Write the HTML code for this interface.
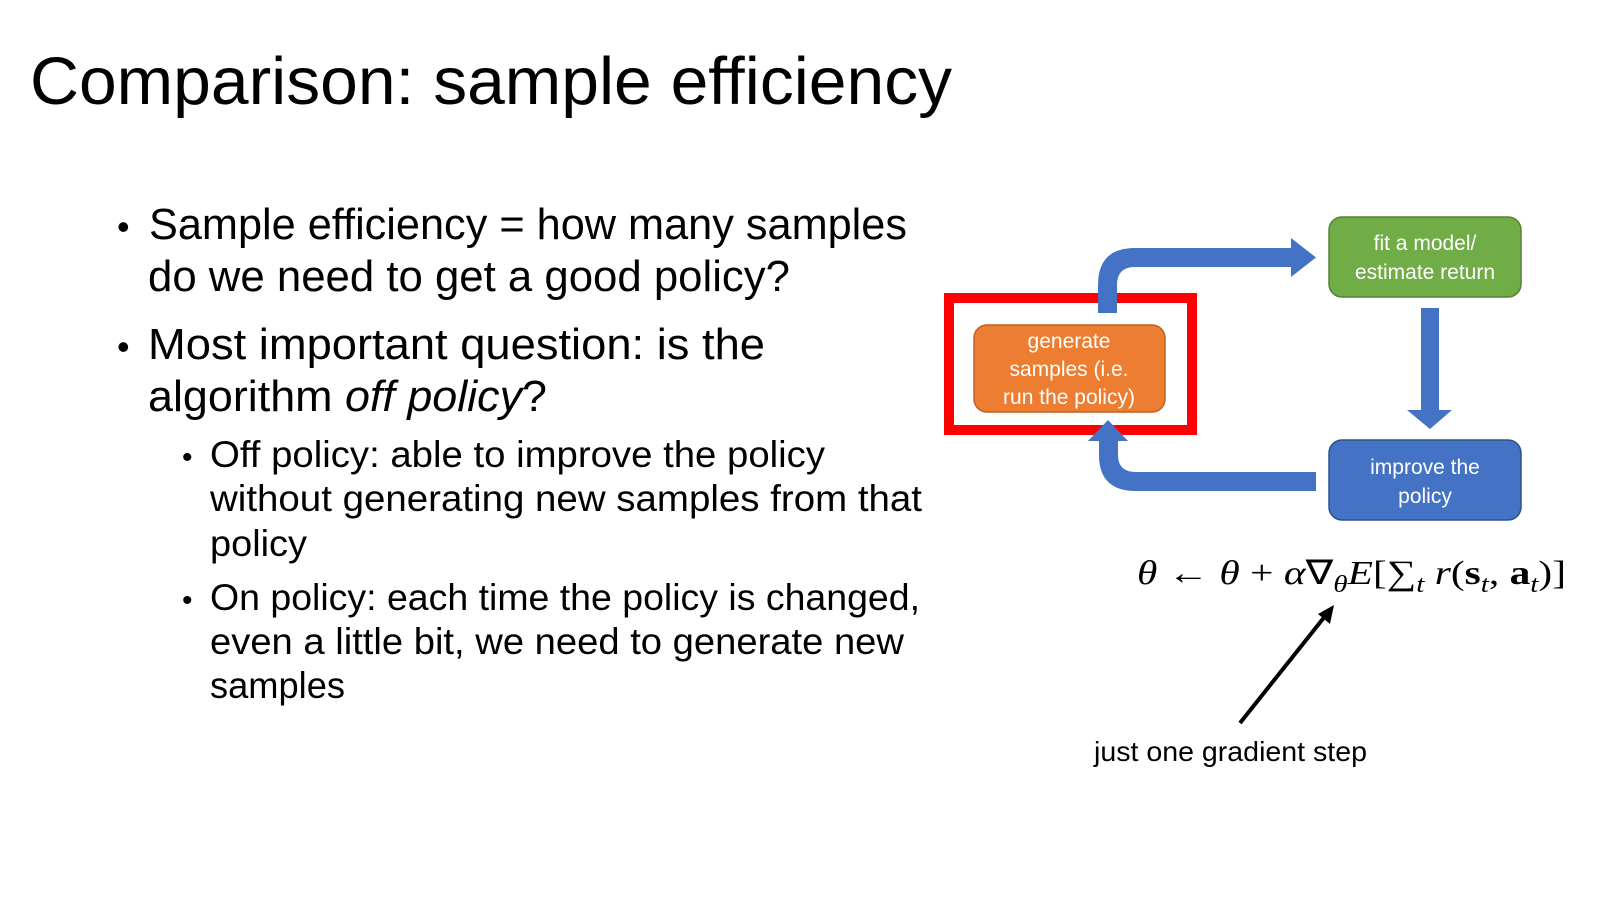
<!DOCTYPE html>
<html><head><meta charset="utf-8"><style>
html,body{margin:0;padding:0;background:#fff;width:1619px;height:898px;overflow:hidden}
svg{display:block}
text{font-family:"Liberation Sans",sans-serif;fill:#000}
.w{fill:#fff;font-size:21px}
</style></head><body>
<svg width="1619" height="898" viewBox="0 0 1619 898" xmlns="http://www.w3.org/2000/svg">
<text x="30" y="104" font-size="67" textLength="922" lengthAdjust="spacingAndGlyphs">Comparison: sample efficiency</text>

<g transform="translate(-1,-2)">
<g font-size="44">
<text x="118" y="241" font-size="36">•</text>
<text x="150" y="241" textLength="758" lengthAdjust="spacingAndGlyphs">Sample efficiency = how many samples</text>
<text x="149" y="293" textLength="642" lengthAdjust="spacingAndGlyphs">do we need to get a good policy?</text>
<text x="118" y="361" font-size="36">•</text>
<text x="149" y="361" textLength="617" lengthAdjust="spacingAndGlyphs">Most important question: is the</text>
<text x="149" y="413" textLength="399" lengthAdjust="spacingAndGlyphs">algorithm <tspan font-style="italic">off policy</tspan>?</text>
</g>
<g font-size="37">
<text x="183" y="469" font-size="30">•</text>
<text x="211" y="469" textLength="615" lengthAdjust="spacingAndGlyphs">Off policy: able to improve the policy</text>
<text x="211" y="513" textLength="712" lengthAdjust="spacingAndGlyphs">without generating new samples from that</text>
<text x="211" y="558" textLength="97" lengthAdjust="spacingAndGlyphs">policy</text>
<text x="183" y="612" font-size="30">•</text>
<text x="211" y="612" textLength="710" lengthAdjust="spacingAndGlyphs">On policy: each time the policy is changed,</text>
<text x="211" y="656" textLength="694" lengthAdjust="spacingAndGlyphs">even a little bit, we need to generate new</text>
<text x="211" y="700" textLength="135" lengthAdjust="spacingAndGlyphs">samples</text>
</g>
</g>

<g transform="translate(-6,0)">
<rect x="955" y="298" width="243" height="132" fill="none" stroke="#ff0000" stroke-width="10"/>
<rect x="980" y="325" width="191" height="87" rx="13" fill="#ED7D31" stroke="#C0621F" stroke-width="1.5"/>
<rect x="1335" y="217" width="192" height="80" rx="13" fill="#70AD47" stroke="#548235" stroke-width="1.5"/>
<rect x="1335" y="440" width="192" height="80" rx="13" fill="#4472C4" stroke="#2F528F" stroke-width="1.5"/>

<path d="M1104,313 V285 Q1104,248 1141,248 H1297 V238 L1322,257.5 L1297,277 V267 H1141 Q1123,267 1123,285 V313 Z" fill="#4472C4"/>
<path d="M1427,308 H1445 V410 H1458 L1436,429 L1413,410 H1427 Z" fill="#4472C4"/>
<path d="M1322,472 H1142 Q1124,472 1124,455 V441 H1134 L1114,420 L1094,441 H1105 V455 Q1105,491 1142,491 H1322 Z" fill="#4472C4"/>

<g text-anchor="middle">
<text class="w" x="1075" y="348">generate</text>
<text class="w" x="1075" y="376">samples (i.e.</text>
<text class="w" x="1075" y="404">run the policy)</text>
<text class="w" x="1431" y="250">fit a model/</text>
<text class="w" x="1431" y="279">estimate return</text>
<text class="w" x="1431" y="474">improve the</text>
<text class="w" x="1431" y="503">policy</text>
</g>

<text x="1143" y="584" font-size="34" textLength="429" lengthAdjust="spacingAndGlyphs" style="font-family:'Liberation Serif',serif"><tspan font-style="italic">θ</tspan> ← <tspan font-style="italic">θ</tspan> + <tspan font-style="italic">α</tspan>∇<tspan font-style="italic" font-size="24" dy="8">θ</tspan><tspan font-style="italic" dy="-8">E</tspan>[∑<tspan font-style="italic" font-size="24" dy="8">t</tspan><tspan font-style="italic" dy="-8"> r</tspan>(<tspan font-weight="bold">s</tspan><tspan font-style="italic" font-size="24" dy="8">t</tspan><tspan dy="-8">, </tspan><tspan font-weight="bold">a</tspan><tspan font-style="italic" font-size="24" dy="8">t</tspan><tspan dy="-8">)]</tspan></text>

<line x1="1246" y1="723" x2="1332" y2="615" stroke="#000" stroke-width="4"/>
<path d="M1340,605 L1324,614 L1336,624 Z" fill="#000"/>
<text x="1100" y="761" font-size="28" textLength="273" lengthAdjust="spacingAndGlyphs">just one gradient step</text>
</g>
</svg>
</body></html>
